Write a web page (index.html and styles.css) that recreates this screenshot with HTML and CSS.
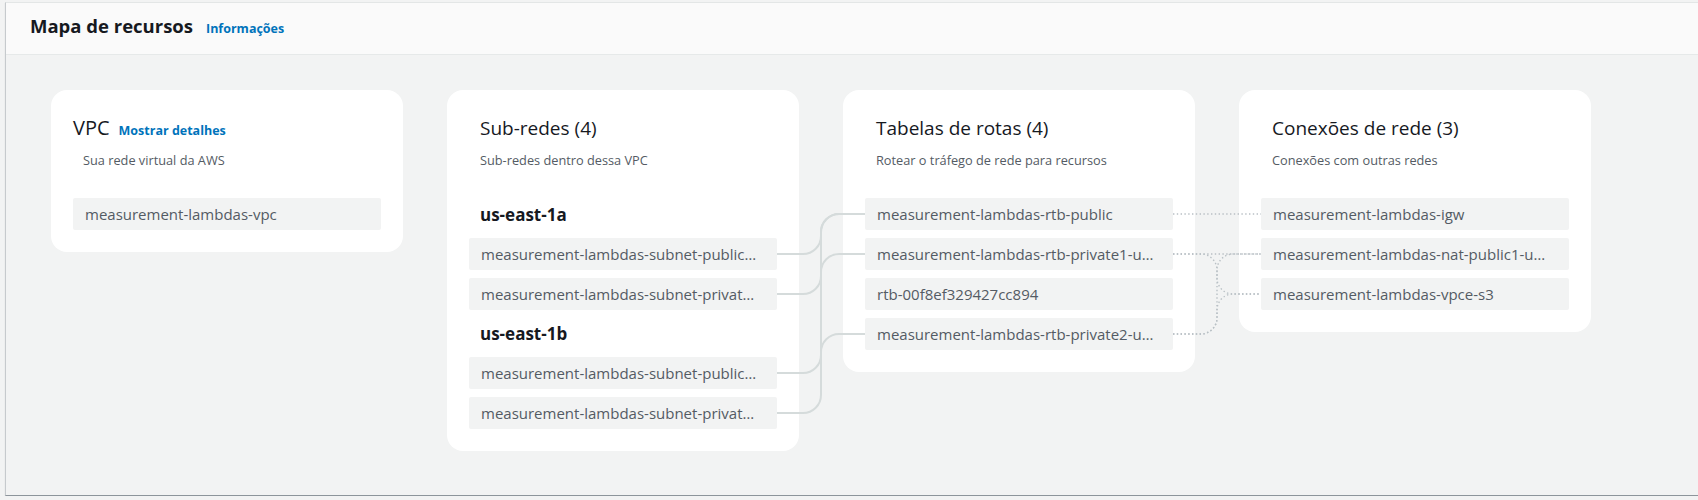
FILE: index.html
```html
<!DOCTYPE html>
<html lang="pt-BR">
<head>
<meta charset="utf-8">
<title>Mapa de recursos</title>
<link rel="stylesheet" href="styles.css">
</head>
<body>
<div class="panel">
  <div class="panel-header">
    <h2 class="panel-title">Mapa de recursos</h2>
    <a class="info-link" href="#">Informações</a>
  </div>
  <div class="map">
    <section class="card card-vpc">
      <div class="vpc-head">
        <h3 class="card-title">VPC</h3>
        <a class="details-link" href="#">Mostrar detalhes</a>
      </div>
      <p class="card-desc vpc-desc">Sua rede virtual da AWS</p>
      <div class="items">
        <div class="item">measurement-lambdas-vpc</div>
      </div>
    </section>

    <section class="card">
      <div class="card-head">
        <h3 class="card-title">Sub-redes (4)</h3>
        <p class="card-desc">Sub-redes dentro dessa VPC</p>
      </div>
      <div class="az-list">
        <div class="az">
          <h4 class="az-title">us-east-1a</h4>
          <div class="items">
            <div class="item">measurement-lambdas-subnet-public1-us-east-1a</div>
            <div class="item">measurement-lambdas-subnet-private1-us-east-1a</div>
          </div>
        </div>
        <div class="az">
          <h4 class="az-title">us-east-1b</h4>
          <div class="items">
            <div class="item">measurement-lambdas-subnet-public2-us-east-1b</div>
            <div class="item">measurement-lambdas-subnet-private2-us-east-1b</div>
          </div>
        </div>
      </div>
    </section>

    <section class="card">
      <div class="card-head">
        <h3 class="card-title">Tabelas de rotas (4)</h3>
        <p class="card-desc">Rotear o tráfego de rede para recursos</p>
      </div>
      <div class="items">
        <div class="item">measurement-lambdas-rtb-public</div>
        <div class="item">measurement-lambdas-rtb-private1-us-east-1a</div>
        <div class="item">rtb-00f8ef329427cc894</div>
        <div class="item">measurement-lambdas-rtb-private2-us-east-1b</div>
      </div>
    </section>

    <section class="card">
      <div class="card-head">
        <h3 class="card-title">Conexões de rede (3)</h3>
        <p class="card-desc">Conexões com outras redes</p>
      </div>
      <div class="items">
        <div class="item">measurement-lambdas-igw</div>
        <div class="item">measurement-lambdas-nat-public1-us-east-1a</div>
        <div class="item">measurement-lambdas-vpce-s3</div>
      </div>
    </section>

    <svg class="links" xmlns="http://www.w3.org/2000/svg" aria-hidden="true">
      <g transform="translate(-6,-55)" fill="none">
        <g class="solid">
          <path d="M777,254 H803 A18,18 0 0 0 821,236 V232 A18,18 0 0 1 839,214 H865"/>
          <path d="M777,294 H803 A18,18 0 0 0 821,276 V272 A18,18 0 0 1 839,254 H865"/>
          <path d="M777,373 H803 A18,18 0 0 0 821,355 V232 A18,18 0 0 1 839,214 H865"/>
          <path d="M777,413 H803 A18,18 0 0 0 821,395 V352 A18,18 0 0 1 839,334 H865"/>
        </g>
        <g class="dotted">
          <path d="M1173,214 H1261"/>
          <path d="M1173,254 H1261"/>
          <path d="M1173,254 H1201 A16,16 0 0 1 1217,270 V278 A16,16 0 0 0 1233,294 H1261"/>
          <path d="M1173,334 H1201 A16,16 0 0 0 1217,318 V270 A16,16 0 0 1 1233,254 H1261"/>
          <path d="M1173,334 H1201 A16,16 0 0 0 1217,318 V310 A16,16 0 0 1 1233,294 H1261"/>
        </g>
      </g>
    </svg>
  </div>
</div>
</body>
</html>
```

FILE: styles.css
```css
* { box-sizing: border-box; }

body {
  margin: 0;
  background: #f2f3f3;
  font-family: "Open Sans", "Noto Sans", Arial, sans-serif;
  color: #16191f;
}

.panel {
  margin: 2px 0 0 5px;
  height: 494px;
  border-top: 1px solid #e3e6e6;
  border-left: 1px solid #c6cacd;
  border-bottom: 1px solid #8d959b;
  box-shadow: 0 1px 1px rgba(0, 28, 36, 0.12);
  background: #f2f3f3;
  display: flex;
  flex-direction: column;
}

.panel-header {
  height: 52px;
  background: #fafafa;
  border-bottom: 1px solid #e6e9e9;
  padding: 11px 0 0 24px;
  display: flex;
  align-items: baseline;
  gap: 13px;
}

.panel-title {
  margin: 0;
  font-size: 18.5px;
  line-height: 24px;
  font-weight: 700;
  color: #16191f;
}

.info-link,
.details-link {
  color: #0073bb;
  font-weight: 700;
  font-size: 12.5px;
  text-decoration: none;
}

.map {
  position: relative;
  flex: 1;
  padding: 35px 0 0 45px;
  display: flex;
  align-items: flex-start;
  gap: 44px;
}

.card {
  width: 352px;
  flex: none;
  background: #ffffff;
  border-radius: 16px;
  padding: 22px;
}

.card-head {
  padding-left: 11px;
}

.vpc-head {
  display: flex;
  align-items: baseline;
  gap: 9px;
}

.card-title {
  margin: 4px 0 0;
  font-size: 19px;
  line-height: 24px;
  font-weight: 400;
  color: #16191f;
}

.card-vpc .card-title {
  font-size: 20px;
}

.card-desc {
  margin: 11px 0 0;
  font-size: 12.75px;
  line-height: 18px;
  color: #545b64;
}

.vpc-desc {
  padding-left: 10px;
}

.card > .items {
  margin-top: 29px;
}

.az-list {
  padding-top: 35px;
}

.az + .az {
  margin-top: 13px;
}

.az-title {
  margin: 0 0 12px;
  padding-left: 11px;
  font-size: 17px;
  line-height: 22px;
  font-weight: 700;
  color: #16191f;
}

.items {
  display: flex;
  flex-direction: column;
  gap: 8px;
}

.item {
  height: 32px;
  line-height: 32px;
  padding: 0 19px 0 12px;
  background: #f2f3f3;
  border-radius: 2px;
  font-size: 15px;
  color: #545b64;
  white-space: nowrap;
  overflow: hidden;
  text-overflow: ellipsis;
}

.links {
  position: absolute;
  left: 0;
  top: 0;
  width: 100%;
  height: 100%;
  pointer-events: none;
  overflow: visible;
}

.solid path {
  stroke: #d5dbdb;
  stroke-width: 2;
}

.dotted path {
  stroke: #b9c0c5;
  stroke-width: 1.4;
  stroke-dasharray: 1.4 2.4;
}
```
